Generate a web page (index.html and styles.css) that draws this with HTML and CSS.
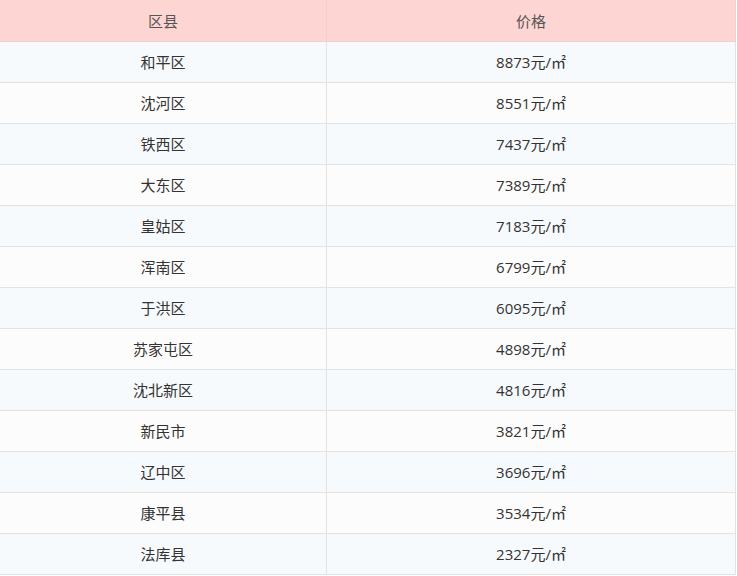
FILE: index.html
```html
<!DOCTYPE html>
<html lang="zh">
<head>
<meta charset="utf-8">
<link rel="stylesheet" href="styles.css">
</head>
<body>
<table class="price-table">
  <thead>
    <tr><th class="col-area">区县</th><th>价格</th></tr>
  </thead>
  <tbody>
    <tr><td>和平区</td><td class="price">8873元/㎡</td></tr>
    <tr><td>沈河区</td><td class="price">8551元/㎡</td></tr>
    <tr><td>铁西区</td><td class="price">7437元/㎡</td></tr>
    <tr><td>大东区</td><td class="price">7389元/㎡</td></tr>
    <tr><td>皇姑区</td><td class="price">7183元/㎡</td></tr>
    <tr><td>浑南区</td><td class="price">6799元/㎡</td></tr>
    <tr><td>于洪区</td><td class="price">6095元/㎡</td></tr>
    <tr><td>苏家屯区</td><td class="price">4898元/㎡</td></tr>
    <tr><td>沈北新区</td><td class="price">4816元/㎡</td></tr>
    <tr><td>新民市</td><td class="price">3821元/㎡</td></tr>
    <tr><td>辽中区</td><td class="price">3696元/㎡</td></tr>
    <tr><td>康平县</td><td class="price">3534元/㎡</td></tr>
    <tr><td>法库县</td><td class="price">2327元/㎡</td></tr>
  </tbody>
</table>
</body>
</html>
```
FILE: styles.css
```css
html, body {
  margin: 0;
  padding: 0;
  background: #ffffff;
}
body {
  font-family: "Noto Sans CJK SC", "Noto Sans", sans-serif;
  font-size: 15px;
  color: #333333;
}
.price-table {
  width: 736px;
  border-collapse: collapse;
  table-layout: fixed;
}
.price-table .col-area {
  width: 326px;
}
.price-table th,
.price-table td {
  height: 40px;
  padding: 0;
  text-align: center;
  vertical-align: middle;
  border-bottom: 1px solid #e3e3e3;
  border-right: 1px solid #e3e3e3;
  line-height: 20px;
}
.price-table th {
  height: 41px;
  background: #fdd6d3;
  color: #555555;
  font-weight: normal;
  border-bottom: 1px solid #f1d0cd;
  border-right-color: #f1d0cd;
}
.price-table td.price {
  font-family: "Open Sans", "Noto Sans CJK SC", sans-serif;
}
.price-table tbody tr:nth-child(odd) td {
  background: #f7fafd;
}
.price-table tbody tr:nth-child(even) td {
  background: #fdfcfc;
}
```
